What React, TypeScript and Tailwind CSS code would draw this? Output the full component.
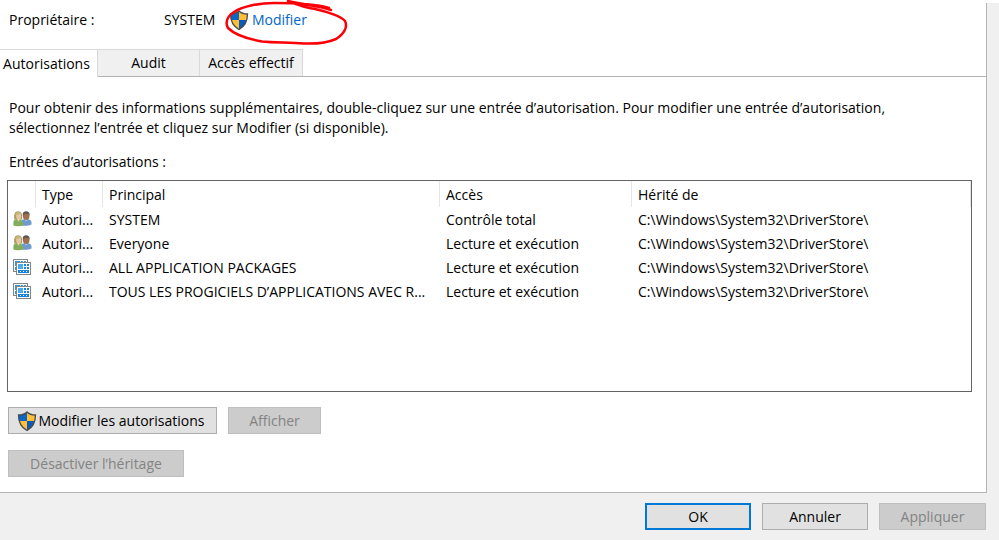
import { useId, type ButtonHTMLAttributes } from 'react';
import { clsx } from 'clsx';

type PrincipalKind = 'group' | 'package';

interface PermissionEntry {
  kind: PrincipalKind;
  type: string;
  principal: string;
  access: string;
  inheritedFrom: string;
}

const ENTRIES: PermissionEntry[] = [
  {
    kind: 'group',
    type: 'Autori...',
    principal: 'SYSTEM',
    access: 'Contrôle total',
    inheritedFrom: 'C:\\Windows\\System32\\DriverStore\\',
  },
  {
    kind: 'group',
    type: 'Autori...',
    principal: 'Everyone',
    access: 'Lecture et exécution',
    inheritedFrom: 'C:\\Windows\\System32\\DriverStore\\',
  },
  {
    kind: 'package',
    type: 'Autori...',
    principal: 'ALL APPLICATION PACKAGES',
    access: 'Lecture et exécution',
    inheritedFrom: 'C:\\Windows\\System32\\DriverStore\\',
  },
  {
    kind: 'package',
    type: 'Autori...',
    principal: 'TOUS LES PROGICIELS D’APPLICATIONS AVEC R...',
    access: 'Lecture et exécution',
    inheritedFrom: 'C:\\Windows\\System32\\DriverStore\\',
  },
];

const SHIELD = 'M10 1C8 3 5 4 1.5 4C1.5 11 3.5 16 10 19.5C16.5 16 18.5 11 18.5 4C15 4 12 3 10 1Z';

function ShieldIcon() {
  const clipId = useId();
  return (
    <svg viewBox="0 0 20 20" className="size-5 shrink-0" aria-hidden="true">
      <clipPath id={clipId}>
        <path d={SHIELD} />
      </clipPath>
      <g clipPath={`url(#${clipId})`}>
        <path d="M0 0h10v10H0z" fill="#0b66c8" />
        <path d="M10 0h10v10H10z" fill="#ffbd38" />
        <path d="M0 10h10v10H0z" fill="#ffbd38" />
        <path d="M10 10h10v10H10z" fill="#0b5cb8" />
      </g>
      <path d={SHIELD} fill="none" stroke="#4c4c4c" strokeWidth="1.3" />
    </svg>
  );
}

function GroupIcon() {
  return (
    <svg viewBox="0 0 19 16" className="block h-4 w-[19px]" aria-hidden="true">
      <path d="M8.5 14.5V10.5C8.5 8.8 10 8 13 8S18.5 9 18.5 11V13.5C16 14.8 12 15.1 8.5 14.5Z" fill="#6f9bcf" />
      <path d="M11.5 8L13 10.6L15 8Z" fill="#b9d3ec" />
      <ellipse cx="13.2" cy="5" rx="3.3" ry="4" fill="#9c7050" />
      <path d="M9.7 4.8C9.4 1.6 10.8.3 13.2.3S17 1.8 16.7 4.8L15.8 3C14 3 12.2 2.8 11 3.4Z" fill="#66584f" />
      <path d="M1.4 8.6C.5 3.3 1.9.3 5 .3S9.8 3 9 8.6Z" fill="#a99a6a" />
      <ellipse cx="5.7" cy="5.2" rx="2.5" ry="3.4" fill="#e6c5a2" />
      <path d="M2.4 4C4.4 4.1 6.7 3.3 7.6 2.2L5.3.8L2.8 1.8Z" fill="#c6b87b" />
      <path d="M.4 14.6V11C.4 9.1 2.2 8.1 5 8.1S10.3 9.5 10.3 14.6C7 15.6 3 15.6.4 14.6Z" fill="#82ad5d" />
      <path d="M4 7.9L5.4 10.7L7.2 8Z" fill="#efd4b4" />
    </svg>
  );
}

function PackageIcon() {
  return (
    <svg viewBox="0 0 18 16" className="block h-4 w-[18px]" shapeRendering="crispEdges" aria-hidden="true">
      <path d="M0 0h15v13H0z" fill="#858585" />
      <path d="M1 1h13v11H1z" fill="#fff" />
      <path d="M2 2h11v9H2z" fill="#2b97e8" />
      <path d="M7 2h1v1H7zM10 2h1v1h-1zM2 7h1v1H2z" fill="#fff" />
      <path d="M3 3h15v13H3z" fill="#858585" />
      <path d="M4 4h13v11H4z" fill="#fff" />
      <path d="M5 5h11v9H5z" fill="#1683dc" />
      <path d="M5 5h5v5H5z" fill="#49aaf0" />
      <path d="M10 5h1v6h-1zM13 5h1v6h-1zM10 7h6v1h-6zM5 10h11v1H5z" fill="#fff" />
      <path d="M7 12h1v1H7zM10 12h1v1h-1zM13 12h1v1h-1z" fill="#fff" />
    </svg>
  );
}

interface DialogButtonProps extends ButtonHTMLAttributes<HTMLButtonElement> {
  isDefault?: boolean;
}

function DialogButton({ isDefault, className, disabled, ...props }: DialogButtonProps) {
  return (
    <button
      type="button"
      disabled={disabled}
      className={clsx(
        'flex h-[27px] items-center justify-center whitespace-nowrap',
        disabled && 'border border-[#bfbfbf] bg-[#cccccc] text-[#838383]',
        !disabled && 'bg-[#e1e1e1] text-black',
        !disabled && (isDefault ? 'border-2 border-[#0078d7]' : 'border border-[#adadad]'),
        className,
      )}
      {...props}
    />
  );
}

function OwnerRow() {
  return (
    <div className="flex h-[46px] items-start pt-[7px] pl-[9px]">
      <span className="w-[155px]">Propriétaire :</span>
      <span className="w-[65px]">SYSTEM</span>
      <a href="#owner" className="relative flex items-center gap-[3px] text-[#0066cc]">
        <ShieldIcon />
        Modifier
        {/* Hand-drawn highlight around the link */}
        <svg
          viewBox="0 0 128 48"
          className="pointer-events-none absolute -top-[10px] -left-[5px] h-12 w-32 overflow-visible"
          fill="none"
          stroke="#fb0007"
          strokeWidth="2.5"
          strokeLinecap="round"
          strokeLinejoin="round"
          aria-hidden="true"
        >
          <path d="M107 10C98 6 86 6 64 1C74 5 83 8 91 9C105 12 118 17 121 21C124 27 120 34 112 39C103 43 92 44 80 43.5C66 42 51 43 38 41.5C24 39 10 34 4 28C1 23 3 16 10 12C19 6 36 3 50 3C68 3 92 4 105 8" />
        </svg>
      </a>
    </div>
  );
}

function Tabs() {
  return (
    <div role="tablist" className="flex h-7">
      <button
        type="button"
        role="tab"
        aria-selected="true"
        className="w-[98px] border-t border-r border-[#d9d9d9] bg-white pr-1 whitespace-nowrap"
      >
        Autorisations
      </button>
      <div className="flex flex-1 border-b border-[#b4b4b4]">
        <button
          type="button"
          role="tab"
          aria-selected="false"
          className="w-[102px] border-t border-r border-[#d9d9d9] bg-[#f0f0f0]"
        >
          Audit
        </button>
        <button
          type="button"
          role="tab"
          aria-selected="false"
          className="w-[103px] border-t border-r border-[#d9d9d9] bg-[#f0f0f0] whitespace-nowrap"
        >
          Accès effectif
        </button>
      </div>
    </div>
  );
}

function EntriesTable() {
  const headClass = 'border-r border-[#e5e5e5] pt-[2px] pl-[6px] text-left font-normal';
  const cellClass = 'truncate pt-[2px] pl-[6px]';
  return (
    <div className="mr-[14px] ml-[7px] min-h-[212px] border border-[#646464] bg-white">
      <table aria-labelledby="entries-label" className="w-full table-fixed border-separate border-spacing-0">
        <colgroup>
          <col className="w-7" />
          <col className="w-[67px]" />
          <col className="w-[337px]" />
          <col className="w-48" />
          <col />
        </colgroup>
        <thead>
          <tr className="h-[26px]">
            <th className={headClass} aria-label="Icône" />
            <th className={headClass}>Type</th>
            <th className={headClass}>Principal</th>
            <th className={headClass}>Accès</th>
            <th className={headClass}>Hérité de</th>
          </tr>
        </thead>
        <tbody>
          {ENTRIES.map((entry) => (
            <tr key={entry.principal} className="h-6">
              <td className="pl-[5px]">{entry.kind === 'group' ? <GroupIcon /> : <PackageIcon />}</td>
              <td className={cellClass}>{entry.type}</td>
              <td className={cellClass}>{entry.principal}</td>
              <td className={cellClass}>{entry.access}</td>
              <td className={cellClass}>{entry.inheritedFrom}</td>
            </tr>
          ))}
        </tbody>
      </table>
    </div>
  );
}

export default function App() {
  return (
    <main className="min-h-screen bg-[#f0f0f0] font-['Open_Sans','Noto_Sans',sans-serif] text-[14px] leading-5 text-black">
      <div className="h-[3px] bg-white" />
      <section className="mr-3 border-r border-b border-[#b4b4b4] bg-white">
        <OwnerRow />
        <Tabs />
        <div className="pt-[21px] pb-[15px]">
          <p className="mr-[80px] ml-[9px]">
            Pour obtenir des informations supplémentaires, double-cliquez sur une entrée d’autorisation. Pour modifier
            une entrée d’autorisation, sélectionnez l’entrée et cliquez sur Modifier (si disponible).
          </p>
          <p id="entries-label" className="mt-[14px] mb-[8px] ml-[9px]">
            Entrées d’autorisations :
          </p>
          <EntriesTable />
          <div className="mt-[15px] ml-2 flex gap-[11px]">
            <DialogButton className="w-[209px] gap-[2px] pr-1">
              <ShieldIcon />
              Modifier les autorisations
            </DialogButton>
            <DialogButton disabled className="w-[93px]">
              Afficher
            </DialogButton>
          </div>
          <DialogButton disabled className="mt-4 ml-2 w-44">
            Désactiver l’héritage
          </DialogButton>
        </div>
      </section>
      <footer className="flex justify-end gap-[11px] py-[10px] pr-[13px]">
        <DialogButton isDefault className="w-[106px]">
          OK
        </DialogButton>
        <DialogButton className="w-[106px]">Annuler</DialogButton>
        <DialogButton disabled className="w-[107px]">
          Appliquer
        </DialogButton>
      </footer>
    </main>
  );
}
